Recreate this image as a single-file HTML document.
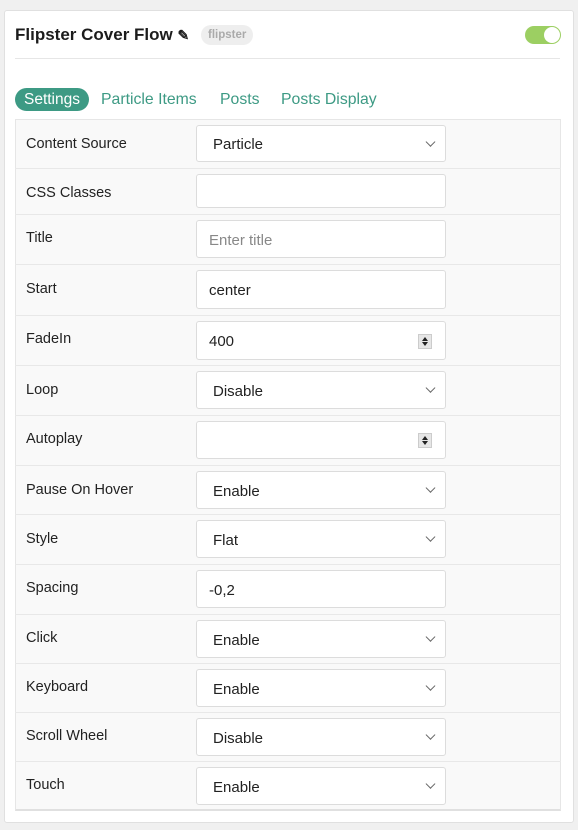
<!DOCTYPE html>
<html><head><meta charset="utf-8"><style>
*{box-sizing:border-box;margin:0;padding:0}
body{width:578px;height:830px;background:#f0f0f0;font-family:"Liberation Sans",sans-serif;position:relative;overflow:hidden}
.card{position:absolute;left:4px;top:10px;width:570px;height:813px;background:#fff;border:1px solid #e0e0e0;border-radius:3px}
.title{position:absolute;left:15px;top:25px;font-size:17px;font-weight:bold;color:#1c1c1c}
.badge{position:absolute;left:201px;top:25px;height:20px;padding:0 7px;background:#eee;border-radius:10px;font-size:11.5px;font-weight:bold;color:#aaa;line-height:21px}
.toggle{position:absolute;left:525px;top:26px;width:36px;height:18px;background:#9ccf62;border-radius:9px}
.toggle:after{content:"";position:absolute;right:1px;top:1px;width:16px;height:16px;border-radius:50%;background:#fff}
.sep{position:absolute;left:15px;top:58px;width:545px;height:1px;background:#e6e6e6}
.tab{position:absolute;top:91px;font-size:15.8px;color:#3d9a84}
.tab.on{left:15px;top:88px;width:74px;height:23px;background:#3d9a84;color:#fff;border-radius:12px;text-align:center;line-height:24px;font-size:15.5px}
.tbl{position:absolute;left:15px;top:119px;width:546px;height:692px;background:#f9f9f9;border:1px solid #e6e6e6;border-bottom:2px solid #e0e0e0}
.row{position:absolute;left:15px;width:546px;border-top:1px solid #e8e8e8}
.lab{position:absolute;left:26px;font-size:14.5px;color:#222;margin-top:2px}
.inp{position:absolute;left:196px;width:250px;background:#fff;border:1px solid #dcdcdc;border-radius:3px;font-size:15px;color:#222;padding-left:16px;display:flex;align-items:center;padding-top:2px}
.inp.t{padding-left:12px}
.ph{color:#888}
.chev{position:absolute;right:11px;top:50%;width:7px;height:7px;border-right:1.5px solid #666;border-bottom:1.5px solid #666;transform:translateY(-80%) rotate(45deg)}
.spin{position:absolute;right:13px;top:50%;width:14px;height:15px;margin-top:-7px;background:#e6e6e6;border:1px solid #ccc}
.spin:before{content:"";position:absolute;left:3px;top:2px;border:3px solid transparent;border-bottom:4px solid #222;border-top:0}
.spin:after{content:"";position:absolute;left:3px;bottom:2px;border:3px solid transparent;border-top:4px solid #222;border-bottom:0}
</style></head><body>
<div class="card"></div>
<div class="title">Flipster Cover Flow <span style="font-size:14px">✎</span></div>
<div class="badge">flipster</div>
<div class="toggle"></div>
<div class="sep"></div>
<div class="tab on">Settings</div>
<div class="tab" style="left:101px">Particle Items</div>
<div class="tab" style="left:220px">Posts</div>
<div class="tab" style="left:281px">Posts Display</div>
<div class="tbl"></div>

<div class="lab" style="top:134px">Content Source</div>
<div class="inp" style="top:125px;height:37px">Particle<span class="chev"></span></div>

<div class="row" style="top:168px"></div>
<div class="lab" style="top:183px">CSS Classes</div>
<div class="inp t" style="top:174px;height:34px"></div>

<div class="row" style="top:214px"></div>
<div class="lab" style="top:228px">Title</div>
<div class="inp t" style="top:220px;height:38px"><span class="ph">Enter title</span></div>

<div class="row" style="top:264px"></div>
<div class="lab" style="top:279px">Start</div>
<div class="inp t" style="top:270px;height:39px">center</div>

<div class="row" style="top:315px"></div>
<div class="lab" style="top:329px">FadeIn</div>
<div class="inp t" style="top:321px;height:39px">400<span class="spin"></span></div>

<div class="row" style="top:365px"></div>
<div class="lab" style="top:380px">Loop</div>
<div class="inp" style="top:371px;height:38px">Disable<span class="chev"></span></div>

<div class="row" style="top:415px"></div>
<div class="lab" style="top:429px">Autoplay</div>
<div class="inp t" style="top:421px;height:38px"><span class="spin"></span></div>

<div class="row" style="top:465px"></div>
<div class="lab" style="top:480px">Pause On Hover</div>
<div class="inp" style="top:471px;height:38px">Enable<span class="chev"></span></div>

<div class="row" style="top:514px"></div>
<div class="lab" style="top:529px">Style</div>
<div class="inp" style="top:520px;height:38px">Flat<span class="chev"></span></div>

<div class="row" style="top:564px"></div>
<div class="lab" style="top:578px">Spacing</div>
<div class="inp t" style="top:570px;height:38px">-0,2</div>

<div class="row" style="top:614px"></div>
<div class="lab" style="top:628px">Click</div>
<div class="inp" style="top:620px;height:38px">Enable<span class="chev"></span></div>

<div class="row" style="top:663px"></div>
<div class="lab" style="top:677px">Keyboard</div>
<div class="inp" style="top:669px;height:38px">Enable<span class="chev"></span></div>

<div class="row" style="top:712px"></div>
<div class="lab" style="top:726px">Scroll Wheel</div>
<div class="inp" style="top:718px;height:38px">Disable<span class="chev"></span></div>

<div class="row" style="top:761px"></div>
<div class="lab" style="top:775px">Touch</div>
<div class="inp" style="top:767px;height:38px">Enable<span class="chev"></span></div>
</body></html>
